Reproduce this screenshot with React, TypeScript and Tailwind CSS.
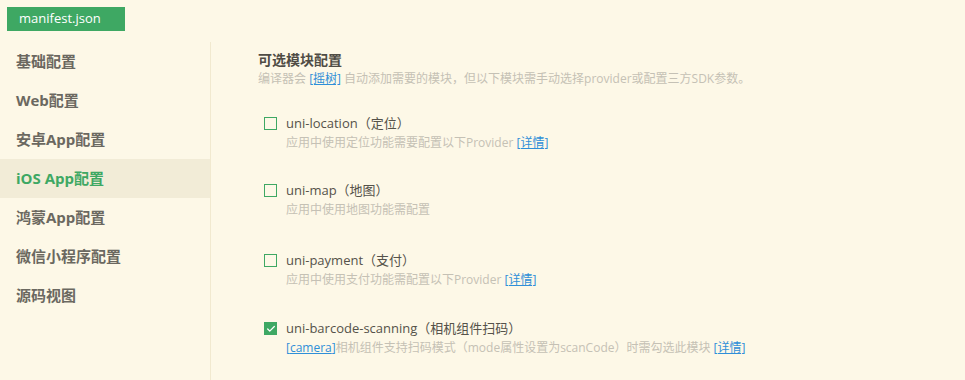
import { Check } from "lucide-react";

const navItems = [
  "基础配置",
  "Web配置",
  "安卓App配置",
  "iOS App配置",
  "鸿蒙App配置",
  "微信小程序配置",
  "源码视图",
];

interface ModuleRowProps {
  name: string;
  desc: string;
  checked?: boolean;
  prefixLink?: string;
  detail?: boolean;
  className?: string;
}

function ModuleRow({ name, desc, checked, prefixLink, detail, className }: ModuleRowProps) {
  return (
    <div className={"flex items-start gap-[9px] " + (className ?? "")}>
      {checked ? (
        <span className="mt-[5px] flex h-[13px] w-[13px] items-center justify-center bg-[#3ea863]">
          <Check size={10} strokeWidth={3} className="text-white" />
        </span>
      ) : (
        <span className="mt-[5px] h-[13px] w-[13px] border border-[#3ea863]" />
      )}
      <div>
        <div className="text-[13px] leading-[22px] text-[#55524a]">{name}</div>
        <div className="text-[12px] leading-[18px] text-[#c5c1b5]">
          {prefixLink && (
            <a className="text-[#2f8fd8] underline">[{prefixLink}]</a>
          )}
          {desc}
          {detail && (
            <>
              {" "}
              <a className="text-[#2f8fd8] underline">[详情]</a>
            </>
          )}
        </div>
      </div>
    </div>
  );
}

export default function App() {
  return (
    <div
      className="flex h-[380px] w-[965px] flex-col bg-[#fdf8e7]"
      style={{ fontFamily: '"Open Sans", "Noto Sans CJK SC", sans-serif' }}
    >
      <div className="px-[7px] pt-[7px]">
        <div className="flex h-[24px] w-[118px] items-center pl-[12px] text-[13px] text-white bg-[#3ea863]">
          manifest.json
        </div>
      </div>
      <div className="mt-[11px] flex flex-1">
        <div className="w-[211px] border-r border-[#f1e9cf]">
          {navItems.map((item) => (
            <div
              key={item}
              className={
                item === "iOS App配置"
                  ? "flex h-[39px] items-center bg-[#f2ecd7] pl-[16px] text-[15px] font-bold text-[#3ea863]"
                  : "flex h-[39px] items-center pl-[16px] text-[15px] font-bold text-[#6b6860]"
              }
            >
              {item}
            </div>
          ))}
        </div>
        <div className="flex-1 pl-[47px] pt-[7px]">
          <div className="text-[14px] font-bold leading-[22px] text-[#4f4c45]">
            可选模块配置
          </div>
          <div className="text-[12px] leading-[16px] text-[#c5c1b5]">
            编译器会 <a className="text-[#2f8fd8] underline">[摇树]</a>{" "}
            自动添加需要的模块，但以下模块需手动选择provider或配置三方SDK参数。
          </div>
          <div className="mt-[25px] flex flex-col pl-[6px]">
            <ModuleRow
              name="uni-location（定位）"
              desc="应用中使用定位功能需要配置以下Provider"
              detail
            />
            <ModuleRow
              className="mt-[27px]"
              name="uni-map（地图）"
              desc="应用中使用地图功能需配置"
            />
            <ModuleRow
              className="mt-[30px]"
              name="uni-payment（支付）"
              desc="应用中使用支付功能需配置以下Provider"
              detail
            />
            <ModuleRow
              className="mt-[28px]"
              name="uni-barcode-scanning（相机组件扫码）"
              desc="相机组件支持扫码模式（mode属性设置为scanCode）时需勾选此模块"
              prefixLink="camera"
              checked
              detail
            />
          </div>
        </div>
      </div>
    </div>
  );
}
